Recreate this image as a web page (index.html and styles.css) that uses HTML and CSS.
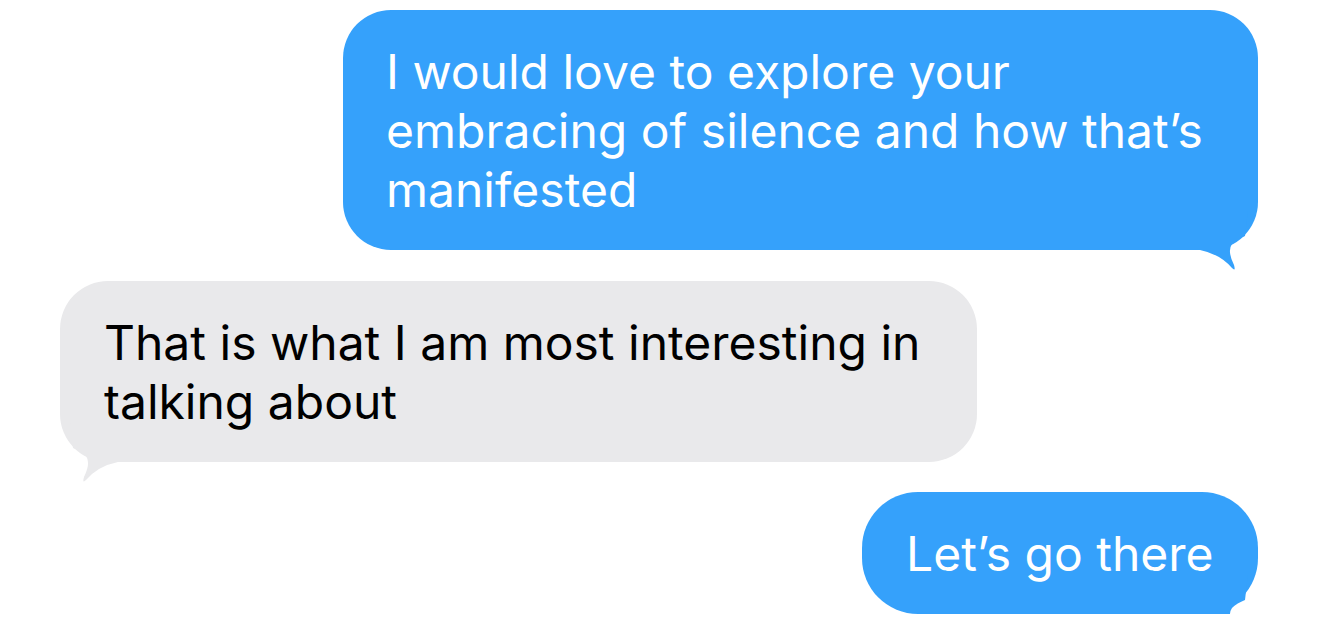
FILE: index.html
```html
<!DOCTYPE html>
<html>

<head>
  <meta charset="UTF-8">
  <meta name="viewport" content="width=device-width, initial-scale=1.0">
  <title>Messages</title>
  <link rel="stylesheet" href="styles.css">
</head>

<body>

  <div class="thread">

    <div class="bubble sent wide">
      <span class="text">I would love to explore your embracing of silence and how that’s manifested</span>
      <svg class="tail tail-right" width="80" height="80" viewBox="0 0 80 80">
        <path d="M0 30 L0 60 L22 60 Q42 64 54 78 Q58 82 56 75 Q49 61 54 54 Q59 49 67 46 L70 20 L40 0 Z" />
      </svg>
    </div>

    <div class="bubble received">
      <span class="text">That is what I am most interesting in talking about</span>
      <svg class="tail tail-left" width="80" height="80" viewBox="0 0 80 80">
        <path d="M0 30 L0 60 L22 60 Q42 64 54 78 Q58 82 56 75 Q49 61 54 54 Q59 49 67 46 L70 20 L40 0 Z" />
      </svg>
    </div>

    <div class="bubble sent short">
      <span class="text">Let’s go there</span>
      <svg class="tail tail-right" width="80" height="80" viewBox="0 0 80 80">
        <path d="M0 30 L0 60 L22 60 Q42 64 54 78 Q58 82 56 75 Q49 61 54 54 Q59 49 67 46 L70 20 L40 0 Z" />
      </svg>
    </div>

  </div>

</body>

</html>
```

FILE: styles.css
```css
body {
  margin: 0;
  background-color: #fff;
  font-family: "Inter", "Liberation Sans", sans-serif;
  overflow: hidden;
}

.thread {
  display: flex;
  flex-direction: column;
  gap: 31px;
  padding: 10px 62px 0 60px;
}

.bubble {
  position: relative;
  box-sizing: border-box;
  font-size: 48px;
  line-height: 59px;
  padding: 32px 44px 31px 44px;
  border-radius: 48px;
}

.text {
  position: relative;
  z-index: 1;
}

.sent {
  align-self: flex-end;
  background-color: #35a1fb;
  color: #fff;
}

.received {
  align-self: flex-start;
  background-color: #e9e9eb;
  color: #000;
  width: 917px;
}

.wide {
  width: 915px;
  padding-left: 43px;
}

.short {
  width: 396px;
  border-radius: 56px;
  margin-top: -1px;
}

.tail {
  position: absolute;
  bottom: -20px;
}

.tail-right {
  right: 0;
}

.tail-left {
  left: 0;
  transform: scaleX(-1);
}

.sent .tail path {
  fill: #35a1fb;
}

.received .tail path {
  fill: #e9e9eb;
}
```
